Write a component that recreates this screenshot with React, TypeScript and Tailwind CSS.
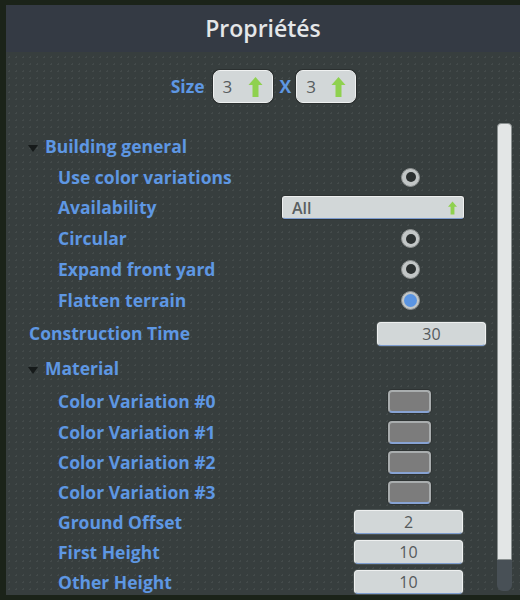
import React from "react";

const font = { fontFamily: '"Open Sans", "Noto Sans", sans-serif' };

function Arrow({ w, h }: { w: number; h: number }) {
  return (
    <svg width={w} height={h} viewBox="0 0 14 20">
      <path d="M7 0 L14 8 L10 8 L10 20 L4 20 L4 8 L0 8 Z" fill="#8fd14f" />
    </svg>
  );
}

function Radio({ on }: { on?: boolean }) {
  return (
    <div className="w-[19px] h-[19px] rounded-full bg-[#c2c6c6] border border-[#8d9191] flex items-center justify-center">
      <div className={on ? "w-[13px] h-[13px] rounded-full bg-[#5b95e2]" : "w-[10px] h-[10px] rounded-full bg-[#2c3131]"} />
    </div>
  );
}

function Input({ v, w }: { v: string; w: string }) {
  return (
    <div className={`${w} h-[24px] rounded-[4px] bg-[#d2d7d8] border border-[#eef0f0] border-b-[#7d9ccf] shadow-[0_0_0_1px_#4a5252] flex items-center justify-center text-[16px] text-[#555a5c]`}>
      {v}
    </div>
  );
}

function Swatch() {
  return (
    <div className="w-[43px] h-[23px] rounded-[4px] bg-[#7c7c7c] border-2 border-[#a9adae] border-b-[#87a3d4] shadow-[0_0_0_1px_#2e3333]" />
  );
}

function Tri() {
  return (
    <svg width="10" height="7" viewBox="0 0 10 7" className="mt-[4px]">
      <path d="M0 0 L10 0 L5 7 Z" fill="#161a1a" />
    </svg>
  );
}

function Row({
  h,
  indent,
  label,
  tri,
  children,
  mr,
}: {
  h: string;
  indent: string;
  label: string;
  tri?: boolean;
  children?: React.ReactNode;
  mr?: string;
}) {
  return (
    <div className={`${h} flex items-center`}>
      <div className={`${indent} flex items-center gap-[7px] flex-1 text-[17.5px] font-bold text-[#5e97e3] whitespace-nowrap`}>
        {tri && <Tri />}
        <span>{label}</span>
      </div>
      {children && <div className={mr}>{children}</div>}
    </div>
  );
}

export default function App() {
  return (
    <div className="w-[520px] h-[600px] bg-[#1b2319] pt-[5px] pl-[6px] pb-[5px] overflow-hidden" style={font}>
      <div className="h-[590px] flex flex-col bg-[#373e3e] bg-[radial-gradient(#434a4a_1px,transparent_1px)] bg-[size:7px_7px]">
        <div className="h-[47px] bg-[#343a44] flex items-center justify-center text-[23px] font-semibold text-[#e4e6e8]">
          Propriétés
        </div>
        <div className="flex-1 flex overflow-hidden">
          <div className="flex-1 flex flex-col">
            <div className="mt-[18px] h-[33px] flex items-center justify-center pl-[24px]">
              <span className="text-[17.5px] font-bold text-[#5e97e3]">Size</span>
              <div className="ml-[8px] w-[60px] h-[33px] rounded-[7px] bg-[#d2d7d8] border border-[#f0f2f2] shadow-[0_0_0_1px_#2b3030] flex items-center justify-between pl-[9px] pr-[9px] text-[17px] text-[#575c5e]">
                <span>3</span>
                <Arrow w={15} h={20} />
              </div>
              <span className="ml-[7px] text-[17.5px] font-bold text-[#5e97e3]">X</span>
              <div className="ml-[5px] w-[60px] h-[33px] rounded-[7px] bg-[#d2d7d8] border border-[#f0f2f2] shadow-[0_0_0_1px_#2b3030] flex items-center justify-between pl-[9px] pr-[9px] text-[17px] text-[#575c5e]">
                <span>3</span>
                <Arrow w={15} h={20} />
              </div>
            </div>
            <div className="mt-[28px] flex flex-col">
              <Row h="h-[31px]" indent="pl-[22px]" label="Building general" tri />
              <Row h="h-[30px]" indent="pl-[52px]" label="Use color variations" mr="mr-[77px]">
                <Radio />
              </Row>
              <Row h="h-[31px]" indent="pl-[52px]" label="Availability" mr="mr-[33px]">
                <div className="w-[182px] h-[23px] rounded-[3px] bg-[#d2d7d8] border border-[#eef0f0] border-b-[#7d9ccf] shadow-[0_0_0_1px_#2e3333] flex items-center justify-between pl-[9px] pr-[6px] text-[16px] font-semibold text-[#5a5f61]">
                  <span>All</span>
                  <Arrow w={9} h={16} />
                </div>
              </Row>
              <Row h="h-[31px]" indent="pl-[52px]" label="Circular" mr="mr-[77px]">
                <Radio />
              </Row>
              <Row h="h-[30px]" indent="pl-[52px]" label="Expand front yard" mr="mr-[77px]">
                <Radio />
              </Row>
              <Row h="h-[32px]" indent="pl-[52px]" label="Flatten terrain" mr="mr-[77px]">
                <Radio on />
              </Row>
              <Row h="h-[35px]" indent="pl-[23px]" label="Construction Time" mr="mr-[11px]">
                <Input v="30" w="w-[109px]" />
              </Row>
              <Row h="h-[35px]" indent="pl-[22px]" label="Material" tri />
              <Row h="h-[31px]" indent="pl-[52px]" label="Color Variation #0" mr="mr-[66px]">
                <Swatch />
              </Row>
              <Row h="h-[30px]" indent="pl-[52px]" label="Color Variation #1" mr="mr-[66px]">
                <Swatch />
              </Row>
              <Row h="h-[30px]" indent="pl-[52px]" label="Color Variation #2" mr="mr-[66px]">
                <Swatch />
              </Row>
              <Row h="h-[30px]" indent="pl-[52px]" label="Color Variation #3" mr="mr-[66px]">
                <Swatch />
              </Row>
              <Row h="h-[30px]" indent="pl-[52px]" label="Ground Offset" mr="mr-[34px]">
                <Input v="2" w="w-[109px]" />
              </Row>
              <Row h="h-[30px]" indent="pl-[52px]" label="First Height" mr="mr-[34px]">
                <Input v="10" w="w-[109px]" />
              </Row>
              <Row h="h-[30px]" indent="pl-[52px]" label="Other Height" mr="mr-[34px]">
                <Input v="10" w="w-[109px]" />
              </Row>
            </div>
          </div>
          <div className="w-[23px] pt-[71px] pb-[4px] flex flex-col">
            <div className="w-[15px] h-[437px] rounded-t-[4px] bg-[#e3e6e6] border border-[#8a9090]" />
            <div className="w-[15px] flex-1 rounded-b-[6px] bg-[#485056]" />
          </div>
        </div>
      </div>
    </div>
  );
}
